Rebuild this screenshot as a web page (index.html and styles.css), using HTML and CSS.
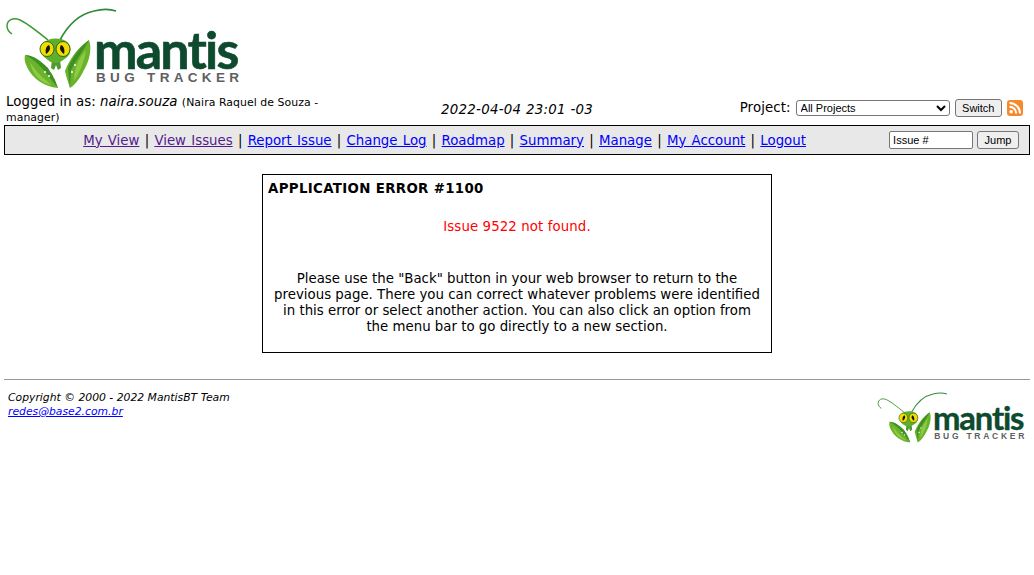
FILE: index.html
```html
<!DOCTYPE html>
<html lang="en">
<head>
  <meta charset="UTF-8" />
  <title>MantisBT</title>
  <link rel="stylesheet" href="styles.css">
</head>
<body>
  <svg class="defs" width="0" height="0">
    <symbol id="mantis-bug" viewBox="0 0 242 92">
      <!-- antennae -->
      <path d="M48 40C38 32 27 23 20 20C13 17 7 20 7 26C7 29 9 32 12 34" fill="none" stroke="#3f9a35" stroke-width="1.5"/>
      <path d="M60 40C68 25 80 14 94 11C102 9 110 9 116 11" fill="none" stroke="#2f8a3a" stroke-width="1.7"/>
      <!-- left arm -->
      <path d="M25 55C36 58 46 66 52 74L58 88C44 87 32 78 27 67C25 63 24 59 25 55Z" fill="#69b42c"/>
      <path d="M25 55C34 55 42 62 48 68L55 80L58 88L50 78C43 68 35 60 25 55Z" fill="#3f8f25"/>
      <path d="M30 62C35 70 42 78 52 85C40 83 32 74 30 62Z" fill="#8fcb42"/>
      <!-- right arm -->
      <path d="M89 40C92 48 90 60 84 70C80 78 76 84 70 88C68 82 66 76 65 71C69 60 78 47 89 40Z" fill="#69b42c"/>
      <path d="M89 40C81 46 73 56 68 68L70 88L71 70C76 60 84 50 89 40Z" fill="#3f8f25"/>
      <path d="M86 50C84 62 80 72 74 81C74 70 78 59 86 50Z" fill="#8fcb42"/>
      <circle cx="45" cy="72" r="1" fill="#fff"/>
      <circle cx="49" cy="76" r="1" fill="#fff"/>
      <circle cx="75" cy="65" r="1" fill="#fff"/>
      <circle cx="72" cy="72" r="1" fill="#fff"/>
      <!-- neck and head -->
      <path d="M52 60L51 68L54 70L56 65L58 70L61 68L60 60Z" fill="#4f9a2b"/>
      <path d="M45 42C48 38 60 37 66 41C72 45 72 54 66 58C62 61 59 63 55 63C51 63 48 60 44 57C40 53 41 46 45 42Z" fill="#5fae2e"/>
      <ellipse cx="47" cy="49" rx="7" ry="7.5" fill="#f4dc00" stroke="#2f6a1a"/>
      <ellipse cx="63" cy="49" rx="7" ry="7.5" fill="#f4dc00" stroke="#2f6a1a"/>
      <path d="M46 54C45 50 46 46 49 45C51 48 50 51 46 54Z" fill="#141414"/>
      <path d="M64 54C65 50 64 46 61 45C59 48 60 51 64 54Z" fill="#141414"/>
    </symbol>
  </svg>

  <div class="logo-top">
    <svg class="logo-big" viewBox="0 0 242 92" role="img" aria-label="Mantis Bug Tracker">
      <use href="#mantis-bug"/>
      <text class="logo-word" x="94" y="68.5">mantis</text>
      <text class="logo-sub" x="96" y="82" textLength="143">BUG TRACKER</text>
    </svg>
  </div>

  <div class="info-row">
    <div class="login-info">Logged in as: <em>naira.souza</em> <small>(Naira Raquel de Souza - manager)</small></div>
    <div class="login-time"><em>2022-04-04 23:01 -03</em></div>
    <form class="project-form">
      <label for="project">Project:</label>
      <select id="project" class="control project-select">
        <option>All Projects</option>
      </select>
      <button type="button" class="control btn">Switch</button>
      <svg class="rss" viewBox="0 0 16 16" role="img" aria-label="RSS">
        <rect width="16" height="16" rx="3" fill="#f58a2c"/>
        <circle cx="4.2" cy="11.8" r="1.8" fill="#fff"/>
        <path d="M2.5 6.8a6.7 6.7 0 0 1 6.7 6.7" fill="none" stroke="#fff" stroke-width="2"/>
        <path d="M2.5 3a10.5 10.5 0 0 1 10.5 10.5" fill="none" stroke="#fff" stroke-width="2"/>
      </svg>
    </form>
  </div>

  <nav class="menu">
    <div class="menu-links">
      <a class="seen" href="#">My View</a> |
      <a class="seen" href="#">View Issues</a> |
      <a href="#">Report Issue</a> |
      <a href="#">Change Log</a> |
      <a href="#">Roadmap</a> |
      <a href="#">Summary</a> |
      <a href="#">Manage</a> |
      <a href="#">My Account</a> |
      <a href="#">Logout</a>
    </div>
    <form class="jump-form">
      <input class="control issue-input" type="text" value="Issue #" />
      <button type="button" class="control btn">Jump</button>
    </form>
  </nav>

  <div class="error-box">
    <h2 class="error-title">APPLICATION ERROR #1100</h2>
    <p class="error-msg">Issue 9522 not found.</p>
    <p class="error-help">Please use the "Back" button in your web browser to return to the previous page. There you can correct whatever problems were identified in this error or select another action. You can also click an option from the menu bar to go directly to a new section.</p>
  </div>

  <hr class="footer-rule" />

  <footer class="footer">
    <address class="footer-text">
      Copyright &copy; 2000 - 2022 MantisBT Team<br />
      <a href="#">redes@base2.com.br</a>
    </address>
    <svg class="logo-small" viewBox="0 0 242 92" role="img" aria-label="Mantis Bug Tracker">
      <use href="#mantis-bug"/>
      <text class="logo-word" x="94" y="68.5">mantis</text>
      <text class="logo-sub" x="96" y="82" textLength="143">BUG TRACKER</text>
    </svg>
  </footer>
</body>
</html>
```

FILE: styles.css
```css
* {
  box-sizing: border-box;
}

body {
  margin: 0;
  padding: 0 4px;
  background: #fff;
  color: #000;
  font-family: "DejaVu Sans", Verdana, sans-serif;
  font-size: 13.33px;
}

a {
  color: #00f;
}

a.seen {
  color: #551a8b;
}

.defs {
  position: absolute;
}

.logo-top {
  height: 92px;
}

.logo-big {
  display: block;
  width: 242px;
  height: 92px;
  margin-left: -4px;
}

.logo-word {
  font-family: Lato, sans-serif;
  font-weight: 700;
  font-size: 52px;
  letter-spacing: -1.8px;
  fill: #0d4a2e;
  stroke: #0d4a2e;
  stroke-width: 0.6px;
}

.logo-sub {
  font-family: "Liberation Sans", sans-serif;
  font-weight: 700;
  font-size: 13.5px;
  fill: #5f5f5f;
}

.info-row {
  display: grid;
  grid-template-columns: 1fr 1fr 1fr;
  align-items: center;
  height: 33px;
}

.login-info {
  align-self: start;
  padding: 3px 8px 0 2px;
  line-height: 14px;
  letter-spacing: 0.05px;
}

.login-info small {
  font-size: 10.9px;
}

.login-time {
  padding-top: 2px;
  text-align: center;
  letter-spacing: 0.3px;
}

.project-form {
  display: flex;
  justify-content: flex-end;
  align-items: center;
  gap: 5px;
  padding: 0 7px 2px 0;
  letter-spacing: 0.1px;
}

.control {
  font-family: "Liberation Sans", Arial, sans-serif;
  font-size: 11px;
  color: #000;
  letter-spacing: 0;
}

.project-select {
  width: 154px;
  height: 16px;
  padding: 0;
  background: #fff;
  border: 1px solid #767676;
  border-radius: 3px;
}

.btn {
  height: 18px;
  padding: 0 6.5px;
  background: #efefef;
  border: 1px solid #767676;
  border-radius: 3px;
}

.rss {
  width: 16px;
  height: 16px;
}

.menu {
  display: flex;
  align-items: center;
  height: 30px;
  background: #e8e8e8;
  border: 1px solid #000;
}

.menu-links {
  flex: 1;
  padding-right: 5px;
  text-align: center;
  word-spacing: 1px;
}

.jump-form {
  display: flex;
  gap: 4px;
  padding-right: 10px;
}

.issue-input {
  width: 84px;
  height: 18px;
  padding: 0 3px;
  background: #fff;
  border: 1px solid #767676;
  border-radius: 2px;
}

.error-box {
  width: 510px;
  height: 179px;
  margin: 19px auto 0;
  padding: 0 5px;
  border: 1px solid #000;
}

.error-title {
  margin: 6px 0 0;
  font-size: 13.33px;
  line-height: 16px;
  letter-spacing: 0.35px;
}

.error-msg {
  margin: 22px 0 0;
  color: #f00;
  text-align: center;
  line-height: 16px;
  letter-spacing: 0.1px;
}

.error-help {
  margin: 36px 0 0;
  padding: 0 5px;
  text-align: center;
  line-height: 16px;
}

.footer-rule {
  height: 1px;
  margin: 26px 0 0;
  border: 0;
  background: #999;
}

.footer {
  display: flex;
  justify-content: space-between;
  align-items: flex-start;
  padding: 7px 3px 0 4px;
}

.footer-text {
  margin-top: 4px;
  font-size: 10.8px;
  line-height: 14px;
  font-style: italic;
}

.logo-small {
  display: block;
  width: 154px;
  height: 58px;
}
```
